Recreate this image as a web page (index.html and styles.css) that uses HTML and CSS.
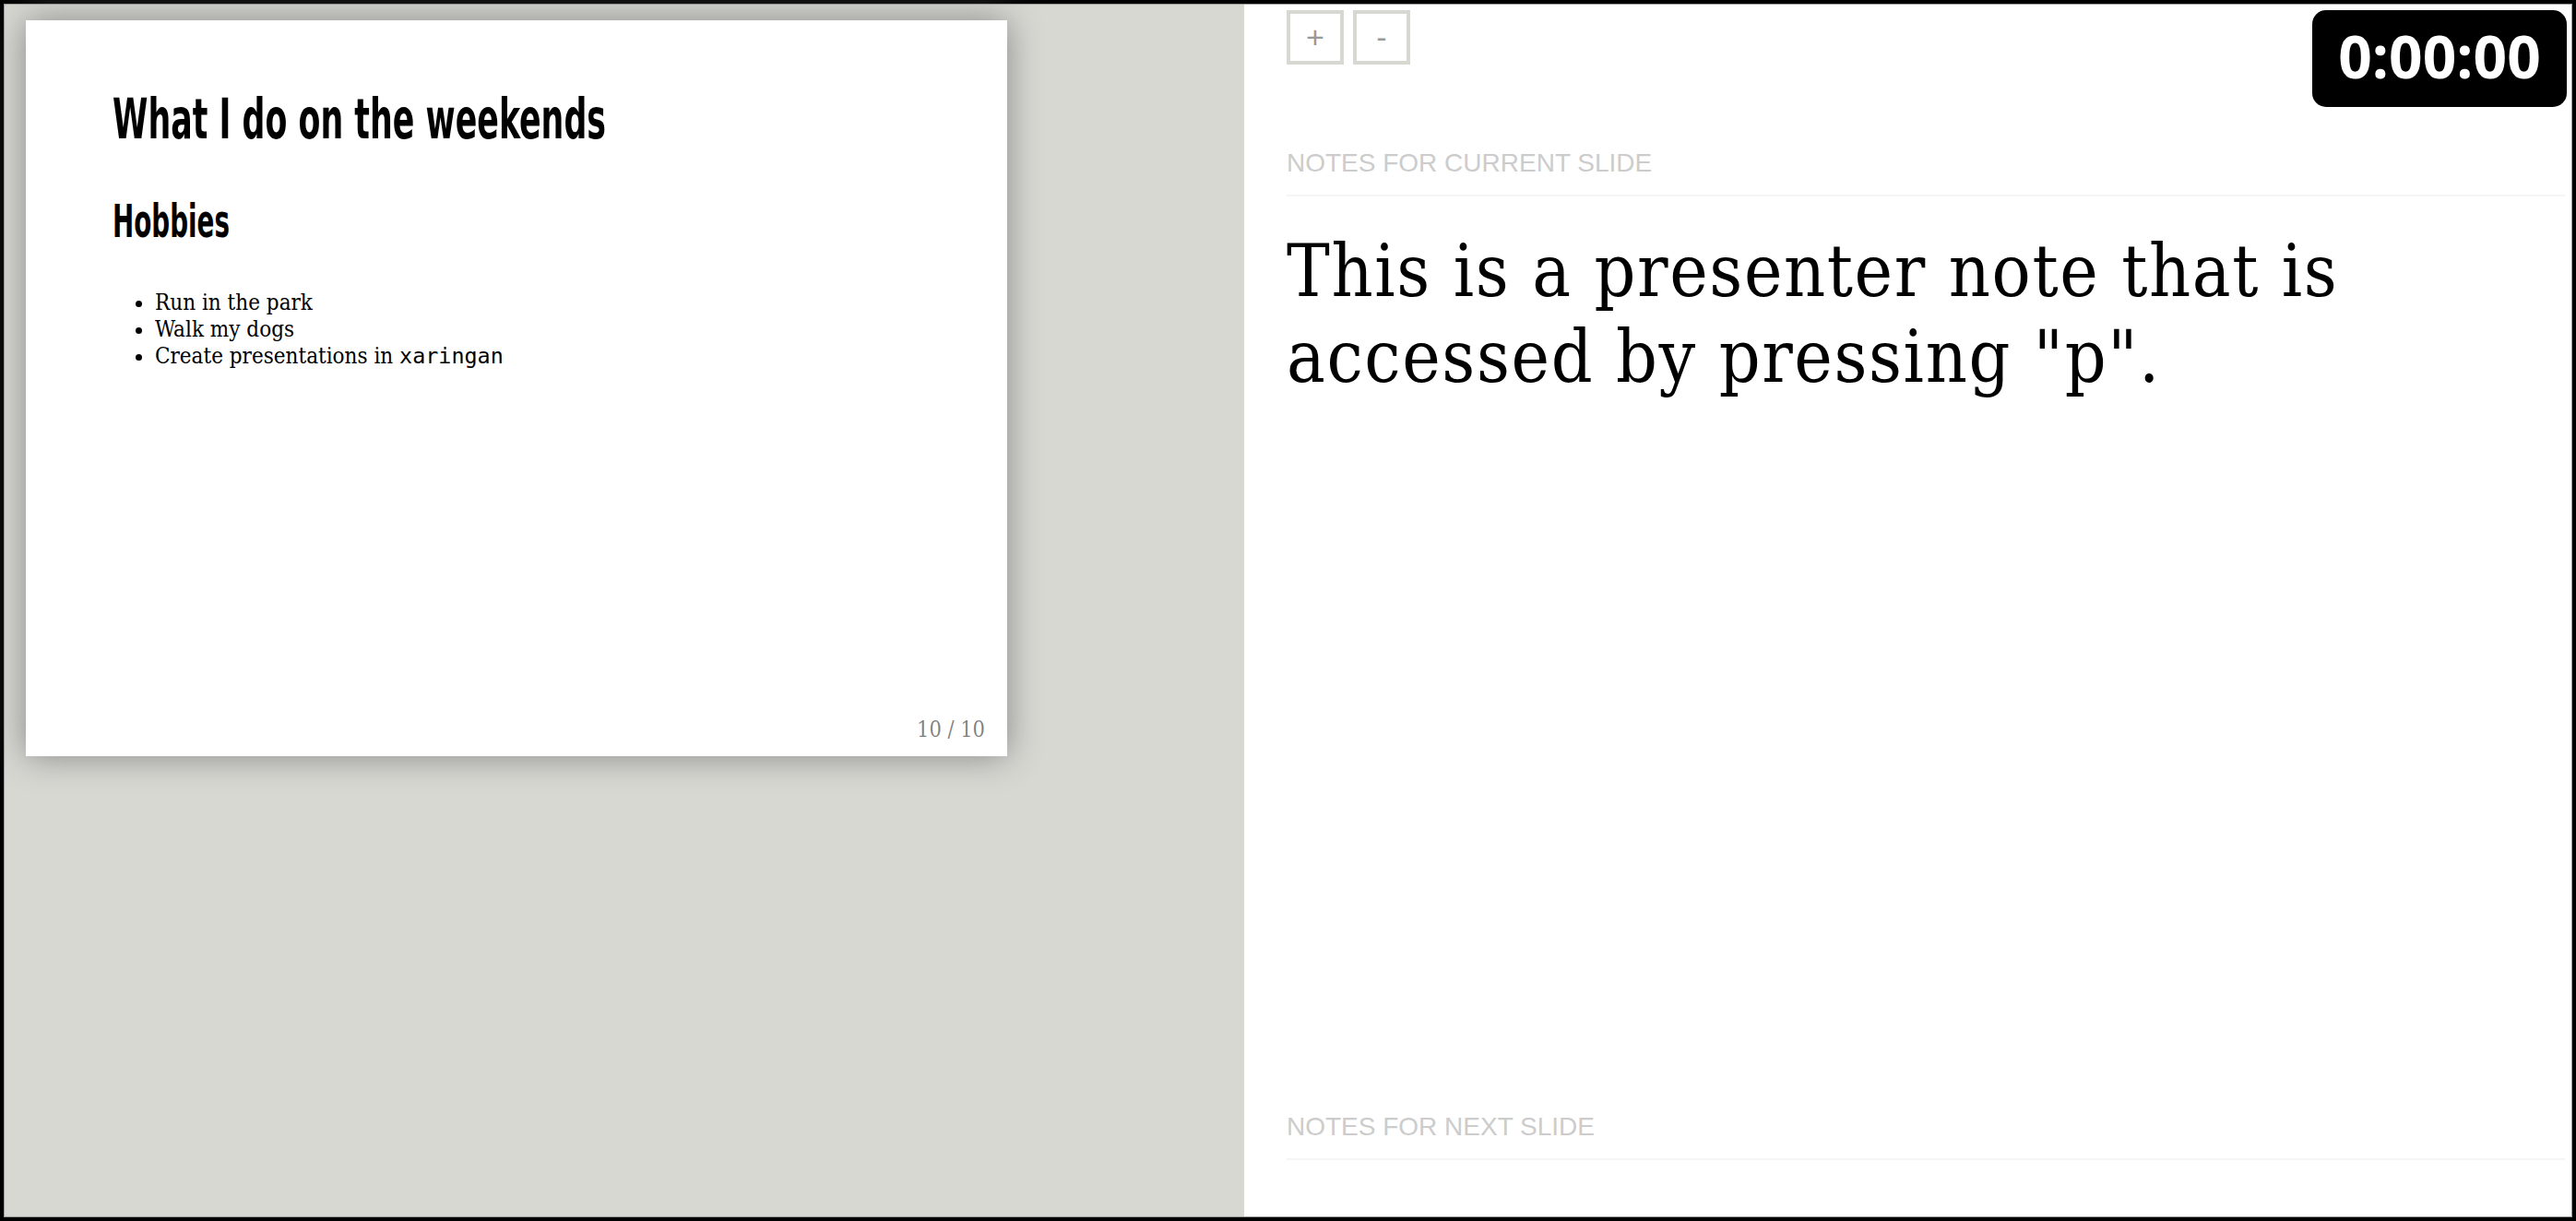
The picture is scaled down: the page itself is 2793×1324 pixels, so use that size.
FILE: index.html
```html
<!DOCTYPE html>
<html lang="en">
<head>
<meta charset="utf-8">
<title>Presenter mode</title>
<link rel="stylesheet" href="styles.css">
</head>
<body>
<div class="frame">
  <div class="inner">
    <div class="slides-area">
      <div class="slide">
        <h1 class="slide-title"><span class="squeeze title-squeeze">What I do on the weekends</span></h1>
        <h2 class="slide-subtitle"><span class="squeeze sub-squeeze">Hobbies</span></h2>
        <ul class="slide-list">
          <li>Run in the park</li>
          <li>Walk my dogs</li>
          <li>Create presentations in <code class="inline-code">xaringan</code></li>
        </ul>
        <div class="slide-number">10 / 10</div>
      </div>
    </div>
    <div class="notes-area">
      <div class="toolbar">
        <div class="zoom-btns">
          <span class="btn">+</span>
          <span class="btn">-</span>
        </div>
        <div class="timer">0:00:00</div>
      </div>
      <div class="notes-current">
        <div class="toggle">Notes for current slide</div>
        <div class="notes">
          <p>This is a presenter note that is accessed by pressing "p".</p>
        </div>
      </div>
      <div class="notes-next">
        <div class="toggle">Notes for next slide</div>
        <div class="notes-preview"></div>
      </div>
    </div>
  </div>
</div>
</body>
</html>
```

FILE: styles.css
```css
html, body {
  margin: 0;
  padding: 0;
}

body {
  width: 2793px;
  height: 1324px;
  overflow: hidden;
  background: #000;
}

.frame {
  box-sizing: border-box;
  width: 2793px;
  height: 1324px;
  border: 4px solid #000;
  display: flex;
}

.inner {
  flex: 1;
  display: flex;
  border: 1px solid #9a9a9a;
  min-width: 0;
}

/* ---------- slide side ---------- */
.slides-area {
  box-sizing: border-box;
  width: 1344px;
  flex: none;
  background: #d7d8d2;
  padding: 17px 0 0 23px;
}

.slide {
  box-sizing: border-box;
  width: 1064px;
  height: 798px;
  background: #fff;
  box-shadow: 0 0 35px #888;
  display: flex;
  flex-direction: column;
  padding: 0 24px 15px 94px;
  color: #000;
  font-family: "DejaVu Serif Condensed", "DejaVu Serif", serif;
}

.slide-title,
.slide-subtitle {
  font-family: "DejaVu Sans Condensed", "DejaVu Sans", sans-serif;
  font-weight: 700;
  white-space: nowrap;
}

.squeeze {
  display: inline-block;
  transform-origin: left center;
}

.slide-title {
  margin: 75px 0 0;
  font-size: 60px;
  line-height: 64px;
}

.title-squeeze {
  transform: scaleX(0.645);
}

.slide-subtitle {
  margin: 52px 0 0;
  font-size: 49px;
  line-height: 56px;
}

.sub-squeeze {
  transform: scaleX(0.63);
}

.slide-list {
  margin: 45px 0 0;
  padding-left: 46px;
  font-size: 24px;
  line-height: 28.8px;
}

.inline-code {
  font-family: "DejaVu Sans Mono", "Liberation Mono", monospace;
  font-size: 23.4px;
}

.slide-number {
  margin-top: auto;
  align-self: flex-end;
  font-size: 23.4px;
  line-height: 28px;
  color: rgba(0, 0, 0, 0.5);
}

/* ---------- notes side ---------- */
.notes-area {
  flex: 1;
  min-width: 0;
  background: #fff;
  display: flex;
  flex-direction: column;
  padding: 6px 7px 0 46px;
}

.toolbar {
  display: flex;
  justify-content: space-between;
  align-items: flex-start;
  margin-right: -2px;
}

.zoom-btns {
  display: flex;
  gap: 10px;
}

.btn {
  box-sizing: border-box;
  width: 62px;
  height: 59px;
  border: 4px solid #d7d8d2;
  display: flex;
  align-items: center;
  justify-content: center;
  font-family: "Liberation Sans", Arial, sans-serif;
  font-size: 34px;
  color: #999;
}

.timer {
  box-sizing: border-box;
  width: 276px;
  height: 105px;
  border-radius: 15px;
  background: #000;
  color: #fff;
  font-family: "Open Sans", sans-serif;
  font-weight: 700;
  font-size: 64px;
  line-height: 1;
  display: flex;
  align-items: center;
  justify-content: center;
  padding-bottom: 5px;
}

.notes-current {
  flex: 1;
  margin-top: 40px;
  display: flex;
  flex-direction: column;
  min-height: 0;
}

.toggle {
  font-family: "Liberation Sans", Arial, sans-serif;
  font-size: 28px;
  line-height: 42px;
  color: #ccc;
  text-transform: uppercase;
  padding-bottom: 13px;
}

.notes {
  border-top: 2px solid #f5f5f5;
  padding-top: 35px;
}

.notes p {
  margin: 0;
  font-family: "DejaVu Serif Condensed", "DejaVu Serif", serif;
  font-size: 78px;
  line-height: 93px;
  letter-spacing: 1.6px;
  color: #000;
}

.notes-next {
  flex: none;
  height: 118px;
}

.notes-preview {
  border-top: 2px solid #f5f5f5;
}
```
